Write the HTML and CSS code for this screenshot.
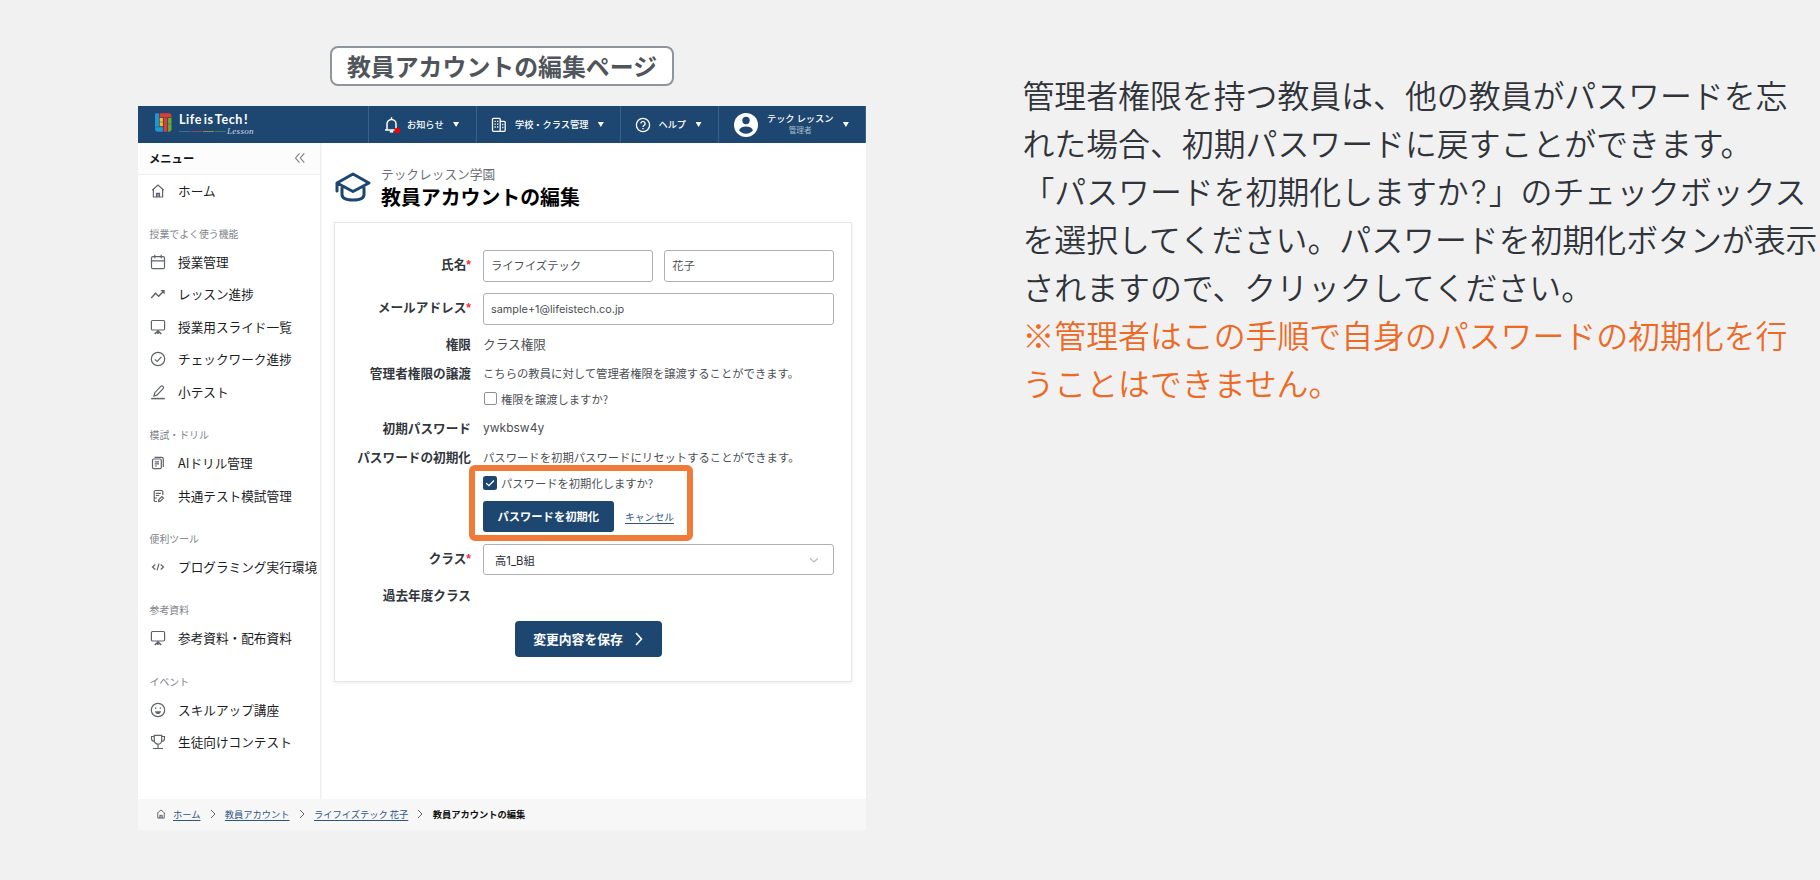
FILE: index.html
```html
<!DOCTYPE html>
<html lang="ja">
<head>
  <meta charset="UTF-8">
  <meta name="viewport" content="width=device-width, initial-scale=1.0">
  <title>教員アカウントの編集ページ</title>
  <link rel="stylesheet" href="styles.css">
</head>
<body>
<div class="slide">
  <section class="screen">
    <h1 class="screen-title">教員アカウントの編集ページ</h1>

    <div class="app">
      <header class="app-header">
        <div class="logo">
          <svg class="logo-mark" viewBox="0 0 17 19">
            <path fill="#2196d4" d="M0 1.5Q0 .3 1.2.3H4V14h4v4.700H3Q0 18.700 0 15.500z"/>
            <path fill="#f4c020" d="M4.500 4.800H8v8.500H4.500z"/>
            <path fill="#e23b32" d="M4.500.3h9.500q2.500 0 2.500 2.500v1.500h-4v14.400h-4V4.300h-4z"/>
            <path fill="#62ae35" d="M13 4.800h3.500v11.500q0 2.400-2.400 2.400H13z"/>
            <path stroke="#1d4770" stroke-width=".4" fill="none" d="M4.300.3v13.500M8.300 4.300v14.400M12.700 4.300v14.400M4.300 9h4M12.700 11h4M4.300 4.500h12.200M0 14h8"/>
          </svg>
          <div class="logo-text">
            <span class="logo-name">Life is Tech<b>!</b></span>
            <span class="logo-sub"><i class="l1"></i><i class="l2"></i><i class="l3"></i><i class="l4"></i><em>Lesson</em></span>
          </div>
        </div>
        <div class="nav nav-news">
          <svg class="nav-icon bell" viewBox="0 0 16 18" fill="none" stroke="#fff" stroke-width="1.500">
            <path d="M1 14h13M3 14V8a4.500 4.500 0 0 1 9 0v6M7.500 3.500V1.200"/>
            <path d="M5.800 15.600h3.400" stroke-width="2"/>
            <circle cx="13.200" cy="14.500" r="2.800" fill="#f00" stroke="none"/>
          </svg>
          <span>お知らせ</span><i class="caret"></i>
        </div>
        <div class="nav nav-school">
          <svg class="nav-icon school" viewBox="0 0 16 16" fill="none" stroke="#fff" stroke-width="1.300">
            <path d="M9.200 14.300H2.500a1 1 0 0 1-1-1v-11a1 1 0 0 1 1-1h5.700a1 1 0 0 1 1 1zM9.200 4.300h4a1 1 0 0 1 1 1v8a1 1 0 0 1-1 1h-4"/>
            <path d="M3.500 4.400h1.300M6 4.400h1.300M3.500 7.200h1.300M6 7.200h1.300M3.500 10h1.300M6 10h1.300M11.200 7.500h1.200M11.200 10.500h1.200"/>
          </svg>
          <span>学校・クラス管理</span><i class="caret"></i>
        </div>
        <div class="nav nav-help">
          <svg class="nav-icon help" viewBox="0 0 16 16" fill="none" stroke="#fff" stroke-width="1.300">
            <circle cx="8" cy="8" r="6.600"/>
            <path d="M5.900 6.600a2.100 2.100 0 1 1 3.300 1.700c-.8.5-1.200.8-1.200 1.700M8 11v1.200"/>
          </svg>
          <span>ヘルプ</span><i class="caret"></i>
        </div>
        <div class="nav nav-user">
          <svg class="avatar" viewBox="0 0 24 24">
            <circle cx="12" cy="12" r="12" fill="#fff"/>
            <circle cx="12" cy="7.500" r="3.700" fill="#1d4770"/>
            <path fill="#1d4770" d="M5 17.200c1.300-2.600 4-3.600 7-3.600s5.700 1 7 3.600c-1.600 2.300-4 3.500-7 3.500s-5.400-1.200-7-3.500z"/>
          </svg>
          <div class="user-text"><span>テック レッスン</span><small>管理者</small></div>
          <i class="caret"></i>
        </div>
      </header>

      <div class="app-body">
        <aside class="sidebar">
          <div class="menu-head">
            <span>メニュー</span>
            <svg viewBox="0 0 12 12" fill="none" stroke="#777c84" stroke-width="1.100"><path d="M5.500 1.300 1.500 6l4 4.700M10.300 1.300 6.300 6l4 4.700"/></svg>
          </div>

          <a class="item">
            <svg viewBox="0 0 16 16"><path d="M2.200 7.300 8 2l5.800 5.300M3.400 6.500V14h9.200V6.500M6.500 14v-3.700h3V14M8 10.500V14"/></svg>ホーム
          </a>

          <p class="group">授業でよく使う機能</p>
          <a class="item">
            <svg viewBox="0 0 16 16"><rect x="1.500" y="2.700" width="13" height="12" rx="1.500"/><path d="M1.500 6.900h13M4.800.8v3.500M11.200.8v3.500"/></svg>授業管理
          </a>
          <a class="item">
            <svg viewBox="0 0 16 16"><path d="M1.200 12 5.500 7.200l3.200 3 5-5.200" stroke-width="1.500"/><path d="M10.300 4h4.400v4.400z" fill="#5f646c" stroke="none"/></svg>レッスン進捗
          </a>
          <a class="item">
            <svg viewBox="0 0 16 16"><rect x="1.400" y="1.500" width="13.200" height="9.500" rx="1.200"/><path d="M8 11v4M8.300 11.800l-3.600 3M7.700 11.800l3.600 3" stroke-width="1.500"/></svg>授業用スライド一覧
          </a>
          <a class="item">
            <svg viewBox="0 0 16 16"><circle cx="8" cy="8" r="6.700"/><path d="m4.800 8.400 2.300 2 4.300-4.600"/></svg>チェックワーク進捗
          </a>
          <a class="item">
            <svg viewBox="0 0 16 16"><path d="M1.200 14.600h13.600" stroke-width="1.500"/><path d="M4 12l.8-3.300 6-6.300a1.500 1.500 0 0 1 2.300 2.200l-5.900 6.300z"/></svg>小テスト
          </a>

          <p class="group">模試・ドリル</p>
          <a class="item">
            <svg viewBox="0 0 16 16"><rect x="2.500" y="4" width="8.800" height="9.700" rx="1.200"/><path d="M4.500 2.400h7.300a1.500 1.500 0 0 1 1.500 1.500V12M4.800 6.800h4.200M4.800 8.900h4.200M4.800 11h2.200"/></svg>AIドリル管理
          </a>
          <a class="item">
            <svg viewBox="0 0 16 16"><path d="M7 13.500H5.500a1.300 1.300 0 0 1-1.300-1.300V3.800a1.300 1.300 0 0 1 1.300-1.300h6a1.300 1.300 0 0 1 1.300 1.300V7M5.800 5.300h5M5.800 7.500h3.500M4.200 10H7M8.500 13.500l.4-2 3-3 1.600 1.600-3 3z"/></svg>共通テスト模試管理
          </a>

          <p class="group">便利ツール</p>
          <a class="item">
            <svg viewBox="0 0 16 16"><path d="M5.300 5.500 2.500 8l2.800 2.500M10.700 5.500 13.500 8l-2.800 2.500M9 4.700l-2 6.600"/></svg>プログラミング実行環境
          </a>

          <p class="group">参考資料</p>
          <a class="item">
            <svg viewBox="0 0 16 16"><rect x="1.400" y="1.500" width="13.200" height="9.500" rx="1.200"/><path d="M8 11v4M8.300 11.800l-3.600 3M7.700 11.800l3.600 3" stroke-width="1.500"/></svg>参考資料・配布資料
          </a>

          <p class="group">イベント</p>
          <a class="item">
            <svg viewBox="0 0 16 16"><circle cx="8" cy="8" r="6.700"/><path d="M5.700 5.500v1.400M10.300 5.500v1.400"/><path d="M5 9.300h6c-.3 1.900-1.500 2.800-3 2.800s-2.700-.9-3-2.800z" fill="#5f646c" stroke="none"/></svg>スキルアップ講座
          </a>
          <a class="item">
            <svg viewBox="0 0 16 16"><path d="M4.300 1.400h7.400v5a3.700 3.700 0 0 1-7.400 0zM4.300 2.500H1.500v2.200q0 2.500 3 2.800M11.700 2.500h2.800v2.200q0 2.500-3 2.800M8 10v4.300M3 14.500h10"/></svg>生徒向けコンテスト
          </a>
        </aside>

        <main class="content">
          <div class="page-head">
            <svg class="hat" viewBox="0 0 36 30" fill="none" stroke="#1d4770" stroke-width="3" stroke-linejoin="round" stroke-linecap="round">
              <path d="M18 2 34 11 18 19.500 2 11zM2 11v8M7 16v6.500q0 5.500 11 5.500t11-5.500V16"/>
            </svg>
            <div>
              <p class="school-name">テックレッスン学園</p>
              <h2 class="page-title">教員アカウントの編集</h2>
            </div>
          </div>

          <form class="card">
            <div class="row row-input">
              <label>氏名<b>*</b></label>
              <div class="field two">
                <div class="input">ライフイズテック</div>
                <div class="input">花子</div>
              </div>
            </div>
            <div class="row row-input row-mail">
              <label>メールアドレス<b>*</b></label>
              <div class="field"><div class="input latin">sample+1@lifeistech.co.jp</div></div>
            </div>
            <div class="row row-text">
              <label>権限</label>
              <div class="field value">クラス権限</div>
            </div>
            <div class="row row-text">
              <label>管理者権限の譲渡</label>
              <div class="field">
                <p class="note">こちらの教員に対して管理者権限を譲渡することができます。</p>
                <div class="check"><i class="box"></i>権限を譲渡しますか?</div>
              </div>
            </div>
            <div class="row row-text">
              <label>初期パスワード</label>
              <div class="field value latin">ywkbsw4y</div>
            </div>
            <div class="row row-text">
              <label>パスワードの初期化</label>
              <div class="field">
                <p class="note">パスワードを初期パスワードにリセットすることができます。</p>
                <div class="reset">
                  <div class="check">
                    <svg class="box-on" viewBox="0 0 14 14"><rect width="14" height="14" rx="2.500" fill="#1d4770"/><path d="m3.200 7.200 2.700 2.500 5-5.200" fill="none" stroke="#fff" stroke-width="1.300"/></svg>パスワードを初期化しますか?
                  </div>
                  <div class="reset-actions">
                    <button type="button" class="btn btn-reset">パスワードを初期化</button>
                    <a class="cancel">キャンセル</a>
                  </div>
                </div>
              </div>
            </div>
            <div class="row row-input row-class">
              <label>クラス<b>*</b></label>
              <div class="field">
                <div class="input select">高1_B組
                  <svg viewBox="0 0 10 10" fill="none" stroke="#bbb" stroke-width="1.200"><path d="m1 3.200 4 3.800 4-3.800"/></svg>
                </div>
              </div>
            </div>
            <div class="row row-text">
              <label>過去年度クラス</label>
            </div>
            <button type="button" class="btn btn-save">変更内容を保存
              <svg viewBox="0 0 8 14" fill="none" stroke="#fff" stroke-width="1.600"><path d="m1 1 5.500 6L1 13"/></svg>
            </button>
          </form>
        </main>
      </div>

      <footer class="crumbs">
        <svg class="home" viewBox="0 0 16 16"><path d="M1.500 7.300 8 1.500l6.500 5.800M2.800 6.500v8h10.400v-8M6 14.500v-4.300h4v4.300M8 10.500v4"/></svg>
        <a>ホーム</a>
        <svg class="sep" viewBox="0 0 6 10"><path d="m1 1 4 4-4 4"/></svg>
        <a>教員アカウント</a>
        <svg class="sep" viewBox="0 0 6 10"><path d="m1 1 4 4-4 4"/></svg>
        <a>ライフイズテック 花子</a>
        <svg class="sep" viewBox="0 0 6 10"><path d="m1 1 4 4-4 4"/></svg>
        <strong>教員アカウントの編集</strong>
      </footer>
    </div>
  </section>

  <section class="explain">
    <p>管理者権限を持つ教員は、他の教員がパスワードを忘<br>れた場合、初期パスワードに戻すことができます。<br>「パスワードを初期化しますか<span class="q">?</span>」のチェックボックス<br>を選択してください。パスワードを初期化ボタンが表示<br>されますので、クリックしてください。</p>
    <p class="warn">※管理者はこの手順で自身のパスワードの初期化を行<br>うことはできません。</p>
  </section>
</div>
</body>
</html>
```

FILE: styles.css
```css
:root {
  --navy: #1d4770;
  --orange: #f07a38;
  --text: #3c4047;
  --gray: #5f646c;
}

*,
*::after {
  box-sizing: border-box;
}

body {
  margin: 0;
  background: #f1f1f1;
  font-family: "Noto Sans CJK JP", sans-serif;
  color: var(--text);
}

p, h1, h2 {
  margin: 0;
}

svg {
  display: block;
  flex: none;
}

.slide {
  display: flex;
  height: 880px;
  overflow: hidden;
}

.screen {
  width: 728px;
  margin-left: 138px;
  padding-top: 46px;
  display: flex;
  flex-direction: column;
  align-items: center;
  flex: none;
}

.screen-title {
  width: 344px;
  height: 40px;
  border: 2px solid #8f959c;
  border-radius: 8px;
  background: #fff;
  color: #50555b;
  font-size: 23.9px;
  font-weight: 700;
  line-height: 35px;
  text-align: center;
  white-space: nowrap;
}

.app {
  width: 728px;
  height: 724px;
  margin-top: 20px;
  background: #fff;
  display: flex;
  flex-direction: column;
}

/* header */
.app-header {
  height: 37px;
  flex: none;
  display: flex;
  background: var(--navy);
  color: #fff;
}

.logo {
  width: 230px;
  padding: 7px 0 0 17px;
  display: flex;
  gap: 7px;
}

.logo-mark {
  width: 17px;
  height: 19px;
}

.logo-text {
  display: flex;
  flex-direction: column;
}

.logo-name {
  font-family: Lato, sans-serif;
  font-size: 12.5px;
  font-weight: 700;
  line-height: 14px;
  letter-spacing: 0.6px;
  word-spacing: -2px;
  white-space: nowrap;
}

.logo-name b {
  margin-left: 1px;
}

.logo-sub {
  display: flex;
  align-items: center;
  gap: 1px;
  height: 8px;
}

.logo-sub i {
  width: 11px;
  height: 1px;
}

.l1 { background: #2a75ac; }
.l2 { background: #96475e; }
.l3 { background: #8f8b48; }
.l4 { background: #3f7d4f; }

.logo-sub em {
  font-family: "Liberation Serif", serif;
  font-size: 9px;
  line-height: 8px;
  letter-spacing: 0.3px;
  color: #d5dde6;
}

.nav {
  display: flex;
  align-items: center;
  border-left: 1px solid #3c6187;
  font-size: 9.2px;
  font-weight: 500;
  white-space: nowrap;
}

.nav > span {
  padding-bottom: 1px;
}

.nav-news { width: 108px; padding-left: 15px; }
.nav-school { width: 144px; padding-left: 14px; }
.nav-help { width: 98px; padding-left: 14px; }
.nav-user { flex: 1; padding-left: 15px; border-right: 1px solid #3c6187; }

.nav-icon {
  width: 16px;
  height: 16px;
}

.bell {
  height: 18px;
  width: 16px;
  margin-right: 7px;
}

.school { margin-right: 8px; }
.help { margin-right: 7.5px; }

.caret {
  width: 6px;
  height: 5px;
  margin-left: 9.5px;
  background: #fff;
  clip-path: polygon(0 0, 100% 0, 50% 100%);
}

.avatar {
  width: 24px;
  height: 24px;
  margin-right: 9px;
}

.user-text {
  display: flex;
  flex-direction: column;
  align-items: center;
  line-height: 11px;
  padding-bottom: 1px;
}

.user-text small {
  font-size: 7.7px;
  font-weight: 400;
  color: #a9bace;
}

/* sidebar */
.app-body {
  flex: 1;
  display: flex;
  min-height: 0;
}

.sidebar {
  width: 183px;
  flex: none;
  border-right: 1px solid #eee;
  box-shadow: 1px 0 3px rgba(0, 0, 0, 0.04);
}

.menu-head {
  height: 32px;
  padding: 0 14px 2px 11px;
  display: flex;
  align-items: center;
  justify-content: space-between;
  background: #fcfcfc;
  border-bottom: 1px solid #eee;
  color: #111;
  font-size: 11.3px;
  font-weight: 700;
}

.menu-head svg {
  width: 12px;
  height: 12px;
}

.item {
  height: 32.5px;
  padding: 0 0 2.4px 12px;
  display: flex;
  align-items: center;
  gap: 12px;
  color: #1c1d1f;
  font-size: 12.65px;
  white-space: nowrap;
}

.item svg {
  width: 16px;
  height: 16px;
  margin-top: 1px;
  fill: none;
  stroke: var(--gray);
  stroke-width: 1.2;
}

.group {
  height: 38.8px;
  padding: 16.5px 0 0 11.5px;
  color: #7d828a;
  font-size: 9.9px;
  line-height: 20px;
}

/* main */
.content {
  flex: 1;
  padding: 22px 14px 0 14px;
}

.page-head {
  display: flex;
  align-items: center;
  gap: 10px;
  height: 42px;
}

.hat {
  width: 36px;
  height: 30px;
  margin-top: 2px;
}

.school-name {
  color: #6a6f77;
  font-size: 12.7px;
  line-height: 20px;
}

.page-title {
  color: #000;
  font-size: 19.9px;
  font-weight: 700;
  line-height: 25px;
}

.card {
  height: 460px;
  margin: 15px 0 0 -1px;
  padding: 27px 17px 0 18px;
  border: 1px solid #e6e6e6;
  box-shadow: 0 1px 4px rgba(0, 0, 0, 0.08);
  display: flex;
  flex-direction: column;
}

.row {
  display: flex;
  gap: 12px;
}

.row label {
  width: 118px;
  flex: none;
  color: #33373d;
  font-size: 12.65px;
  font-weight: 700;
  line-height: 20px;
  text-align: right;
  white-space: nowrap;
  display: flex;
  justify-content: flex-end;
}

.row label b {
  color: #f0303a;
  font-family: "Liberation Sans", sans-serif;
  font-size: 12px;
  line-height: 22px;
}

.row-input {
  align-items: center;
  margin-bottom: 11.5px;
}

.row-input label {
  padding-bottom: 1.5px;
}

.row-mail {
  margin-bottom: 9.3px;
}

.row-text {
  margin-bottom: 9.4px;
}

.field {
  flex: 1;
  min-width: 0;
}

.two {
  display: flex;
  gap: 11.5px;
}

.input {
  flex: 1;
  height: 31.5px;
  padding: 0 0 1.5px 7px;
  display: flex;
  align-items: center;
  border: 1px solid #adb0b4;
  border-radius: 3px;
  background: #fff;
  color: #4b4f55;
  font-size: 11.3px;
}

.value {
  font-size: 12.65px;
  line-height: 20px;
  color: #4b4f55;
}

.latin {
  font-family: Inter, sans-serif;
}

.input.latin {
  padding-bottom: 0;
  font-size: 10.85px;
}

.value.latin {
  font-size: 12px;
}

.note {
  font-size: 11.35px;
  line-height: 20px;
  color: #4b4f55;
  white-space: nowrap;
}

.check {
  display: flex;
  align-items: center;
  gap: 4px;
  height: 20px;
  margin-top: 5.5px;
  font-size: 11.3px;
  color: #4b4f55;
  white-space: nowrap;
}

.box {
  width: 13px;
  height: 13px;
  margin-left: 1px;
  border: 1px solid #8b9096;
  border-radius: 2px;
}

.box-on {
  width: 14px;
  height: 14px;
}

.reset {
  position: relative;
}

.reset .check {
  margin-top: 5.5px;
}

/* orange frame drawn over the reset controls */
.reset::after {
  content: "";
  position: absolute;
  left: -14px;
  top: -8px;
  width: 224px;
  height: 76px;
  border: 6px solid var(--orange);
  border-radius: 6px;
}

.reset-actions {
  display: flex;
  align-items: center;
  gap: 11.5px;
  margin-top: 8.5px;
}

.btn {
  border: 0;
  padding: 0 0 1px;
  display: flex;
  align-items: center;
  justify-content: center;
  background: var(--navy);
  color: #fff;
  font-family: inherit;
  font-weight: 700;
  white-space: nowrap;
}

.btn-reset {
  width: 130.5px;
  height: 31px;
  border-radius: 3px;
  font-size: 11.3px;
}

.cancel {
  color: #2c5580;
  font-size: 9.8px;
  text-decoration: underline;
  text-underline-offset: 2px;
}

.row-class {
  margin-top: 2px;
  margin-bottom: 9.7px;
}

.select {
  padding: 0 14px 0 11px;
  justify-content: space-between;
  color: #2b2e33;
  font-family: Inter, "Noto Sans CJK JP", sans-serif;
}

.select svg {
  width: 10px;
  height: 10px;
}

.btn-save {
  width: 147px;
  height: 36px;
  margin: 7px 0 0 162px;
  padding-right: 1px;
  gap: 12px;
  border-radius: 4px;
  font-size: 12.8px;
}

.btn-save svg {
  width: 8px;
  height: 14px;
}

/* breadcrumb */
.crumbs {
  height: 31px;
  flex: none;
  padding: 0 0 1px 18px;
  display: flex;
  align-items: center;
  background: #f7f7f7;
  font-size: 9.25px;
  white-space: nowrap;
}

.crumbs a {
  color: #2c5580;
  text-decoration: underline;
  text-underline-offset: 2px;
}

.crumbs strong {
  color: #111;
}

.crumbs svg {
  fill: none;
  stroke: var(--gray);
}

.home {
  width: 10px;
  height: 10px;
  margin-right: 7px;
  stroke-width: 1.5;
}

.sep {
  width: 6px;
  height: 10px;
  margin: 0 9.2px;
}

/* explanation text */
.explain {
  margin-left: 156.5px;
  padding-top: 70px;
  flex: none;
  font-size: 31.88px;
  font-weight: 350;
  line-height: 48px;
  color: #30343a;
  white-space: nowrap;
}

.q {
  padding: 0 2px;
  font-family: Inter, sans-serif;
  font-weight: 300;
  line-height: 0;
}

.warn {
  color: #ec6a26;
}
```
